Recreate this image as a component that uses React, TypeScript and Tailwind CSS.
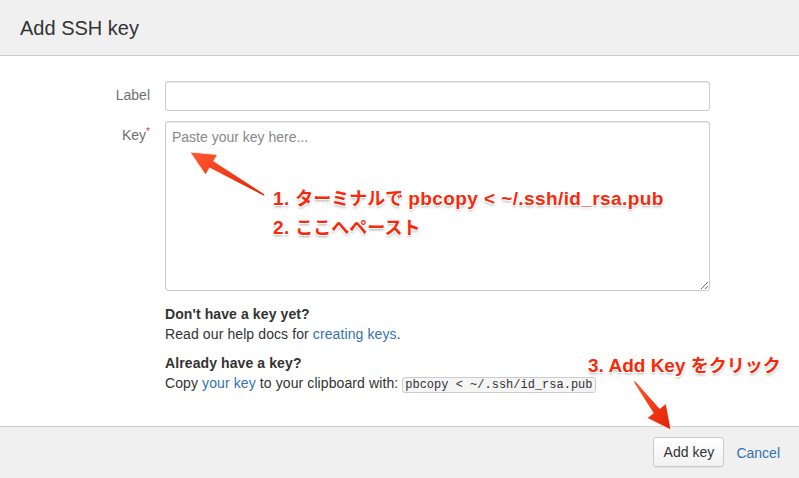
export default function App() {
  const note =
    "absolute whitespace-nowrap text-[18px] font-bold leading-none text-[#f7290a] [text-shadow:_1px_1px_0_#fff,_-1px_-1px_0_#fff,_1px_-1px_0_#fff,_-1px_1px_0_#fff,_0_2px_3px_rgba(0,0,0,0.35)]";
  const latin = "text-[19px] tracking-[0.4px]";

  return (
    <div className="relative flex h-[478px] w-full flex-col overflow-hidden bg-white font-['Liberation_Sans','Noto_Sans_CJK_JP',sans-serif] text-[14px] text-[#333]">
      <header className="flex h-[56px] items-center border-b border-[#cccccc] bg-[#f0f0f0] px-5">
        <h1 className="text-[20px] font-normal text-[#333]">Add SSH key</h1>
      </header>

      <main className="flex-1 pt-[25px]">
        <div className="flex items-center">
          <label className="w-[150px] pb-[2px] text-right text-[#707070]">Label</label>
          <input
            type="text"
            className="ml-[15px] h-[30px] w-[545px] rounded-[3px] border border-[#cccccc] px-[6px] shadow-[inset_0_1px_1px_rgba(0,0,0,0.08)] outline-none"
          />
        </div>

        <div className="mt-[10px] flex items-start">
          <label className="w-[150px] pt-[4px] text-right text-[#707070]">
            Key<sup className="text-[10px] text-[#d04437]">*</sup>
          </label>
          <textarea
            placeholder="Paste your key here..."
            className="ml-[15px] h-[170px] w-[545px] rounded-[3px] border border-[#cccccc] px-[6px] py-[5px] shadow-[inset_0_1px_1px_rgba(0,0,0,0.08)] outline-none placeholder:text-[#888]"
          />
        </div>

        <div className="ml-[165px] mt-[13px] leading-5 tracking-[0.1px]">
          <p className="font-bold">Don't have a key yet?</p>
          <p>
            Read our help docs for <a className="text-[#3572b0]">creating keys</a>.
          </p>
          <p className="mt-[9px] font-bold">Already have a key?</p>
          <p>
            Copy <a className="text-[#3572b0]">your key</a> to your clipboard with:{" "}
            <code className="rounded-[3px] border border-[#cccccc] bg-[#f5f5f5] px-[2px] font-['Liberation_Mono',monospace] text-[12px] tracking-normal text-[#333]">
              pbcopy &lt; ~/.ssh/id_rsa.pub
            </code>
          </p>
        </div>
      </main>

      <footer className="flex h-[52px] items-start justify-end gap-3 border-t border-[#cccccc] bg-[#f0f0f0] pr-[19px] pt-[10px]">
        <button className="h-[30px] w-[71px] rounded-[3px] border border-[#cccccc] bg-gradient-to-b from-white to-[#f2f2f2] text-[#333] shadow-[0_1px_0_rgba(0,0,0,0.05)]">
          Add key
        </button>
        <a className="pt-[6px] text-[#3572b0]">Cancel</a>
      </footer>

      <svg className="pointer-events-none absolute left-0 top-0" width="799" height="478">
        <defs>
          <linearGradient id="ar" x1="0" y1="0" x2="1" y2="1">
            <stop offset="0" stopColor="#ff5a30" />
            <stop offset="1" stopColor="#e21f05" />
          </linearGradient>
        </defs>
        <polygon
          points="190,152 217.6,154.5 213.6,161 264.8,194.3 263.8,196.1 209.6,168 205.6,174.9"
          fill="url(#ar)"
          stroke="#ffffff"
          strokeWidth="0.8"
        />
        <polygon
          points="671,430 646.9,418 653.3,413.2 633.4,381.9 635,380.7 659.7,408.4 666.1,403.6"
          fill="url(#ar)"
          stroke="#ffffff"
          strokeWidth="0.8"
        />
      </svg>

      <div className={note + " left-[273px] top-[189px]"}>
        <span className={latin}>1. </span>ターミナルで <span className={latin}>pbcopy &lt; ~/.ssh/id_rsa.pub</span>
      </div>
      <div className={note + " left-[273px] top-[218px]"}>
        <span className={latin}>2. </span>ここへペースト
      </div>
      <div className={note + " left-[588px] top-[356px]"}>
        <span className="text-[19px]">3. Add Key </span>をクリック
      </div>
    </div>
  );
}
